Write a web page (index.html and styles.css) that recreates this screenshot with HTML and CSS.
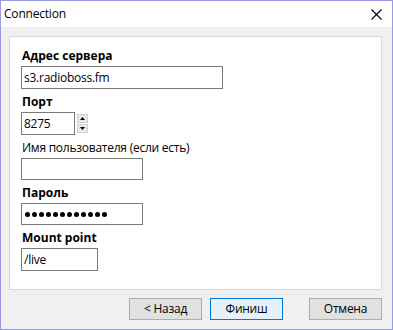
FILE: index.html
```html
<!DOCTYPE html>
<html lang="ru">
<head>
<meta charset="utf-8">
<title>Connection</title>
<link rel="stylesheet" href="styles.css">
</head>
<body>
<div class="window">
  <div class="titlebar">
    <span class="title">Connection</span>
    <svg class="close" width="11" height="11" viewBox="0 0 11 11"><path d="M0.5 0.5 L10.5 10.5 M10.5 0.5 L0.5 10.5" stroke="#000" stroke-width="1.1" fill="none"/></svg>
  </div>
  <div class="content">
    <div class="panel">
      <div class="label bold">Адрес сервера</div>
      <div class="field w-server">s3.radioboss.fm</div>

      <div class="label bold">Порт</div>
      <div class="port-row">
        <div class="field w-port">8275</div>
        <div class="spin">
          <div class="spin-btn"><svg width="5" height="3" viewBox="0 0 5 3"><path d="M2.5 0 L5 3 L0 3 Z" fill="#000"/></svg></div>
          <div class="spin-btn"><svg width="5" height="3" viewBox="0 0 5 3"><path d="M0 0 L5 0 L2.5 3 Z" fill="#000"/></svg></div>
        </div>
      </div>

      <div class="label">Имя пользователя (если есть)</div>
      <div class="field w-user"></div>

      <div class="label bold">Пароль</div>
      <div class="field w-user dots">
        <span class="dot"></span><span class="dot"></span><span class="dot"></span><span class="dot"></span><span class="dot"></span><span class="dot"></span><span class="dot"></span><span class="dot"></span><span class="dot"></span><span class="dot"></span><span class="dot"></span><span class="dot"></span>
      </div>

      <div class="label bold">Mount point</div>
      <div class="field w-mount">/live</div>
    </div>
    <div class="buttons">
      <div class="btn">&lt; Назад</div>
      <div class="btn primary">Финиш</div>
      <div class="btn cancel">Отмена</div>
    </div>
  </div>
</div>
</body>
</html>
```

FILE: styles.css
```css
* { box-sizing: border-box; }
html, body { margin: 0; padding: 0; }
body {
  font-family: "Open Sans", "Noto Sans", "DejaVu Sans", sans-serif;
  font-size: 12px;
  letter-spacing: -0.25px;
  color: #000;
  background: #fff;
}
.window {
  width: 393px;
  height: 330px;
  border: 1px solid #9b9be2;
  background: #f0f0f0;
  display: flex;
  flex-direction: column;
}
.titlebar {
  height: 26px;
  background: #fff;
  display: flex;
  align-items: center;
  justify-content: space-between;
  padding: 0 10px 0 3px;
}
.title { font-size: 12px; line-height: 16px; margin-top: -1px; letter-spacing: -0.2px; }
.close { display: block; margin-top: 1px; }
.content {
  padding: 9px 10px 0 8px;
  display: flex;
  flex-direction: column;
}
.panel {
  height: 254px;
  background: #fff;
  border: 1px solid #d9d9d9;
  padding: 11px 11px 0 11px;
  display: flex;
  flex-direction: column;
  align-items: flex-start;
}
.label {
  line-height: 16px;
  height: 16px;
  margin-bottom: 2px;
  padding-left: 1px;
  white-space: nowrap;
}
.bold { font-weight: 700; letter-spacing: 0; }
.field {
  height: 23px;
  border: 1px solid #7a7a7a;
  background: #fff;
  padding: 0 2px;
  line-height: 21px;
  margin-bottom: 5px;
  white-space: nowrap;
}
.w-server { width: 202px; }
.w-port { width: 54px; margin-bottom: 0; }
.w-user { width: 122px; height: 22px; line-height: 20px; }
.w-mount { width: 77px; }
.port-row {
  display: flex;
  align-items: flex-start;
  margin-bottom: 5px;
}
.spin {
  margin-left: 2px;
  margin-top: 2px;
  display: flex;
  flex-direction: column;
  gap: 1px;
}
.spin-btn {
  width: 11px;
  height: 9px;
  background: #e8e8e8;
  border: 1px solid #d0d0d0;
  display: flex;
  align-items: center;
  justify-content: center;
}
.spin-btn svg { display: block; }
.dots {
  display: flex;
  align-items: center;
  gap: 2px;
  padding-left: 3px;
}
.dot {
  width: 5px;
  height: 5px;
  border-radius: 50%;
  background: #000;
}
.buttons {
  margin-top: 8px;
  display: flex;
  justify-content: flex-end;
  gap: 8px;
}
.btn {
  width: 73px;
  height: 22px;
  border: 1px solid #adadad;
  background: #e1e1e1;
  display: flex;
  align-items: center;
  justify-content: center;
  line-height: 16px;
}
.btn.primary {
  border-color: #0078d7;
  background: #e5f1fb;
}
.btn.cancel { margin-left: 18px; }
```
